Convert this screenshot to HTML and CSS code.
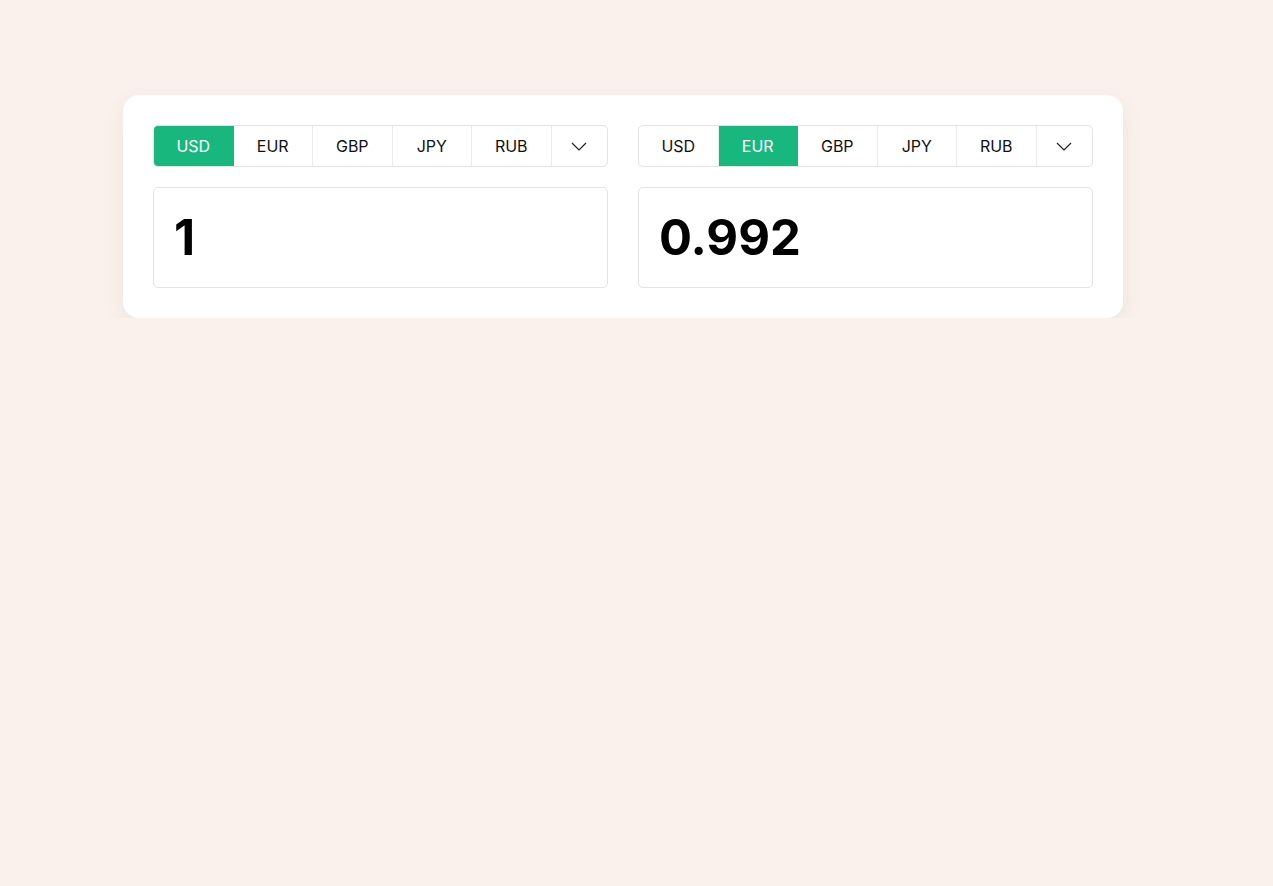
FILE: index.html
```html
<!DOCTYPE html>
<html lang="en">
<head>
<meta charset="utf-8">
<title>Converter</title>
<link rel="stylesheet" href="styles.css">
</head>
<body>
<div class="page">
  <div class="card">
    <div class="block">
      <div class="tabs">
        <div class="tab active">USD</div>
        <div class="tab">EUR</div>
        <div class="tab">GBP</div>
        <div class="tab">JPY</div>
        <div class="tab">RUB</div>
        <div class="tab arrow"><svg width="16" height="9" viewBox="0 0 16 9"><path d="M1 1l7 7 7-7" fill="none" stroke="#222" stroke-width="1.2"/></svg></div>
      </div>
      <div class="field">1</div>
    </div>
    <div class="block">
      <div class="tabs">
        <div class="tab">USD</div>
        <div class="tab active">EUR</div>
        <div class="tab">GBP</div>
        <div class="tab">JPY</div>
        <div class="tab">RUB</div>
        <div class="tab arrow"><svg width="16" height="9" viewBox="0 0 16 9"><path d="M1 1l7 7 7-7" fill="none" stroke="#222" stroke-width="1.2"/></svg></div>
      </div>
      <div class="field">0.992</div>
    </div>
  </div>
</div>
</body>
</html>
```

FILE: styles.css
```css
html, body {
  margin: 0;
  padding: 0;
  background: #faf1ec;
  font-family: Inter, "Noto Sans", sans-serif;
}
.page {
  padding-top: 95px;
  padding-left: 123px;
}
.card {
  width: 1000px;
  box-sizing: border-box;
  background: #fff;
  border-radius: 16px;
  padding: 30px;
  display: flex;
  gap: 30px;
  box-shadow: 0 8px 20px rgba(120, 90, 70, 0.08);
}
.block {
  flex: 1 1 0;
  min-width: 0;
  display: flex;
  flex-direction: column;
  gap: 20px;
}
.tabs {
  display: flex;
  height: 42px;
  box-sizing: border-box;
  border: 1px solid #e3e3e3;
  border-radius: 5px;
  overflow: hidden;
}
.tab {
  flex: none;
  box-sizing: border-box;
  width: 79.5px;
  display: flex;
  align-items: center;
  justify-content: center;
  font-size: 16px;
  color: #111;
  border-right: 1px solid #ececec;
}
.tab.active {
  background: #18b77e;
  color: #fff;
  border-right-color: #18b77e;
}
.tab.arrow {
  flex: 1;
  border-right: none;
}
.field {
  height: 101px;
  box-sizing: border-box;
  border: 1px solid #e3e3e3;
  border-radius: 5px;
  padding: 0 20px;
  display: flex;
  align-items: center;
  font-size: 49px;
  font-weight: 700;
  color: #000;
}
```
